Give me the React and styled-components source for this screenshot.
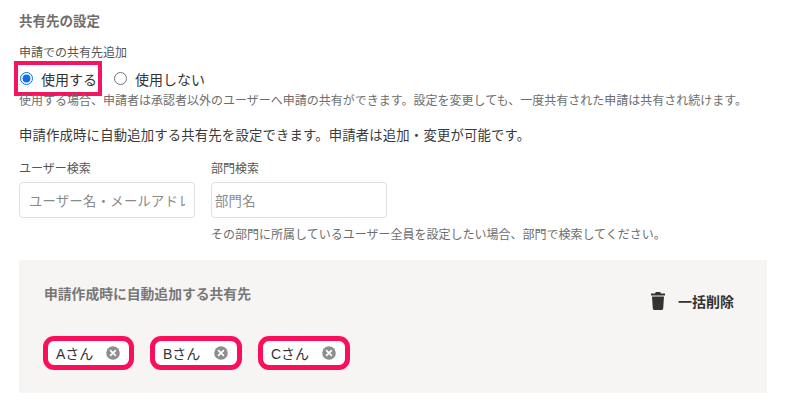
import React from "react";
import styled, { createGlobalStyle } from "styled-components";

const Global = createGlobalStyle`
  html, body { margin: 0; padding: 0; background: #fff; }
  body { font-family: "Noto Sans CJK JP", "Liberation Sans", sans-serif; color: #333; overflow: hidden; }
`;
const Page = styled.div`
  width: 791px; height: 416px; box-sizing: border-box; padding: 11px 24px 0 19px; overflow: hidden;
`;
const Title = styled.h2`
  margin: 0; font-size: 13.5px; line-height: 18px; font-weight: 700; color: #6f6f6f;
`;
const Label = styled.div`
  margin-top: 14px; font-size: 12px; line-height: 18px; color: #555;
`;
const RadioRow = styled.div`
  display: flex; align-items: center; margin-top: 0; margin-left: -5px; height: 35px;
`;
const RadioLabel = styled.label`
  display: flex; align-items: center; box-sizing: border-box; height: ${p => (p.$marked ? "35px" : "auto")};
  padding: ${p => (p.$marked ? "0 1px 0 2px" : "0")};
  border: ${p => (p.$marked ? "4.5px solid #f5145f" : "0")};
  margin-left: ${p => (p.$marked ? "0" : "12px")};
  font-size: 14px; color: #333; gap: 8px;
`;
const RadioInput = styled.input`
  margin: 0; width: 13px; height: 13px; accent-color: #0b6fe8;
`;
const Help = styled.p`
  margin: -5px 0 0; font-size: 12px; line-height: 18px; color: #6d6d6d; white-space: nowrap;
`;
const Lead = styled.p`
  margin: 16px 0 0; font-size: 13.35px; letter-spacing: 0.18px; line-height: 20px; color: #3a3a3a; white-space: nowrap;
`;
const Fields = styled.div`
  display: flex; gap: 16px; margin-top: 14px;
`;
const Field = styled.div`
  display: flex; flex-direction: column; width: ${p => p.$width}px;
`;
const FieldLabel = styled.div`
  font-size: 12px; line-height: 18px; color: #555; margin-bottom: 5px;
`;
const TextInput = styled.input`
  box-sizing: border-box; width: 176px; height: 36px; border: 1px solid #e3dfd8; border-radius: 4px;
  padding: 0 ${p => p.$pad}px; font: 13.3px "Noto Sans CJK JP", sans-serif; letter-spacing: 0.3px; color: #333; background: #fff; outline: none;
  &::placeholder { color: #8a8a8a; opacity: 1; }
`;
const Hint = styled.div`
  margin-top: 7px; font-size: 12px; line-height: 18px; color: #6d6d6d; white-space: nowrap;
`;
const Panel = styled.section`
  margin-top: 17px; height: 133px; box-sizing: border-box; background: #f6f5f3; padding: 23px 33px 0 25px;
`;
const PanelHead = styled.div`
  display: flex; justify-content: space-between; align-items: flex-start;
`;
const PanelTitle = styled.h3`
  margin: 0; font-size: 13.8px; line-height: 20px; font-weight: 700; color: #777;
`;
const BulkDelete = styled.button`
  display: flex; align-items: center; gap: 13px; margin-top: 8px; padding: 0; border: 0; background: none;
  font: 700 14px "Noto Sans CJK JP", sans-serif; color: #333;
`;
const Chips = styled.div`
  display: flex; gap: 16px; margin-top: 25px; margin-left: -1px;
`;
const Chip = styled.div`
  display: flex; align-items: center; justify-content: space-between; box-sizing: border-box;
  width: ${p => p.$width}px; height: 34px; padding: 0 9px 0 8px; background: #fff;
  border: 5px solid #fb0f5c; border-radius: 11px; font-size: 14px; color: #333;
`;
const ChipText = styled.span`
  font-family: "Liberation Sans", "Noto Sans CJK JP", sans-serif; white-space: nowrap;
`;

const Trash = () => (
  <svg width="14" height="18" viewBox="0 0 14 18" aria-hidden="true">
    <path fill="#333" d="M4.8 0h4.4l.7 1.4H14v2H0v-2h4.1zM1 4.6h12l-.8 12c-.05.8-.6 1.4-1.4 1.4H3.2c-.8 0-1.35-.6-1.4-1.4z" />
  </svg>
);
const Remove = () => (
  <svg width="14" height="14" viewBox="0 0 14 14" aria-hidden="true">
    <circle cx="7" cy="7" r="6.8" fill="#8e8e8e" />
    <path d="M4.6 4.6l4.8 4.8M9.4 4.6l-4.8 4.8" stroke="#fff" strokeWidth="1.7" strokeLinecap="round" />
  </svg>
);

const chips = [["Aさん", 91], ["Bさん", 92], ["Cさん", 92]];

export default function App() {
  return (
    <Page>
      <Global />
      <Title>共有先の設定</Title>
      <Label>申請での共有先追加</Label>
      <RadioRow>
        <RadioLabel $marked>
          <RadioInput type="radio" name="use" defaultChecked />
          使用する
        </RadioLabel>
        <RadioLabel>
          <RadioInput type="radio" name="use" />
          使用しない
        </RadioLabel>
      </RadioRow>
      <Help>使用する場合、申請者は承認者以外のユーザーへ申請の共有ができます。設定を変更しても、一度共有された申請は共有され続けます。</Help>
      <Lead>申請作成時に自動追加する共有先を設定できます。申請者は追加・変更が可能です。</Lead>
      <Fields>
        <Field $width={176}>
          <FieldLabel>ユーザー検索</FieldLabel>
          <TextInput $pad={9} placeholder="ユーザー名・メールアドレス" />
        </Field>
        <Field $width={176}>
          <FieldLabel>部門検索</FieldLabel>
          <TextInput $pad={3} placeholder="部門名" />
          <Hint>その部門に所属しているユーザー全員を設定したい場合、部門で検索してください。</Hint>
        </Field>
      </Fields>
      <Panel>
        <PanelHead>
          <PanelTitle>申請作成時に自動追加する共有先</PanelTitle>
          <BulkDelete type="button"><Trash />一括削除</BulkDelete>
        </PanelHead>
        <Chips>
          {chips.map(([name, width]) => (
            <Chip key={name} $width={width}>
              <ChipText>{name}</ChipText>
              <Remove />
            </Chip>
          ))}
        </Chips>
      </Panel>
    </Page>
  );
}
